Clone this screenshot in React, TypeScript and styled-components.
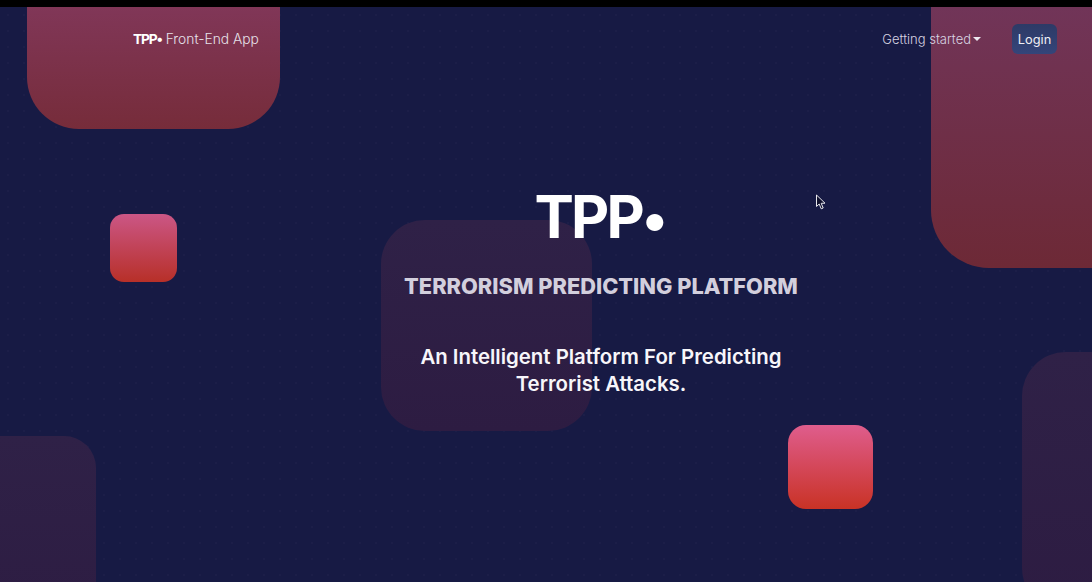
import React from "react";
import styled, { createGlobalStyle, css } from "styled-components";

const GlobalStyle = createGlobalStyle`
  html, body {
    margin: 0;
    padding: 0;
    background: #000;
  }
  body {
    font-family: "Inter", "Liberation Sans", sans-serif;
  }
`;

const Page = styled.div`
  width: 1092px;
  height: 582px;
  overflow: hidden;
  display: flex;
  flex-direction: column;
`;
const TopBar = styled.div`
  height: 7px;
  flex: none;
  background: #000;
`;
const Stage = styled.main`
  position: relative;
  flex: 1;
  overflow: hidden;
  background-color: #171a44;
  background-image: radial-gradient(
    circle at center,
    rgba(255, 255, 255, 0.02) 0.8px,
    transparent 1.2px
  );
  background-size: 16px 16px;
`;

const block = css`
  position: absolute;
`;
const bright = css`
  ${block}
  background: linear-gradient(180deg, #df5d8d 0%, #c93225 100%);
`;
const faint = css`
  ${block}
  background: linear-gradient(180deg, #2f2147 0%, #2d1c42 100%);
`;

const TopLeftBlock = styled.div`
  ${block}
  left: 27px;
  top: -6px;
  width: 253px;
  height: 128px;
  border-radius: 0 0 52px 52px;
  background: linear-gradient(180deg, #813759 0%, #762c3a 100%);
`;
const TopRightBlock = styled.div`
  ${block}
  left: 931px;
  top: -6px;
  width: 260px;
  height: 267px;
  border-radius: 0 0 0 58px;
  background: linear-gradient(180deg, #713559 0%, #6d2936 100%);
`;
const SmallBlock = styled.div`
  ${bright}
  left: 110px;
  top: 207px;
  width: 67px;
  height: 68px;
  border-radius: 14px;
  opacity: 0.9;
`;
const MediumBlock = styled.div`
  ${bright}
  left: 788px;
  top: 418px;
  width: 85px;
  height: 84px;
  border-radius: 18px;
`;
const CenterBlock = styled.div`
  ${faint}
  left: 381px;
  top: 213px;
  width: 211px;
  height: 211px;
  border-radius: 44px;
`;
const RightBlock = styled.div`
  ${faint}
  left: 1022px;
  top: 345px;
  width: 211px;
  height: 260px;
  border-radius: 44px;
`;
const LeftBlock = styled.div`
  ${faint}
  left: -115px;
  top: 429px;
  width: 211px;
  height: 211px;
  border-radius: 32px;
`;

const Nav = styled.nav`
  position: relative;
  display: flex;
  align-items: center;
  justify-content: space-between;
  height: 64px;
  padding: 0 35px 0 133px;
`;
const Brand = styled.a`
  padding-bottom: 1px;
  font-size: 13.8px;
  font-weight: 300;
  color: #e6e2ea;
`;
const BrandMark = styled.strong`
  font-weight: 700;
  color: #fff;
  letter-spacing: -1.2px;
`;
const NavRight = styled.div`
  display: flex;
  align-items: center;
  gap: 31px;
`;
const NavLink = styled.a`
  display: flex;
  align-items: center;
  gap: 2px;
  font-size: 13px;
  font-weight: 300;
  color: #d8d4e2;
`;
const Caret = styled.span`
  width: 0;
  height: 0;
  border-left: 4px solid transparent;
  border-right: 4px solid transparent;
  border-top: 4px solid #eeeaf2;
`;
const LoginButton = styled.button`
  width: 45px;
  height: 30px;
  padding: 0;
  border: 0;
  border-radius: 6px;
  background: linear-gradient(180deg, #2d3a66 0%, #34457a 100%);
  color: #f0eff5;
  font-family: inherit;
  font-size: 12.8px;
  font-weight: 400;
`;

const Hero = styled.section`
  position: relative;
  display: flex;
  flex-direction: column;
  align-items: center;
  width: 440px;
  margin: 110px 0 0 381px;
  text-align: center;
  color: #fff;
`;
const Logo = styled.h1`
  margin: 0;
  font-size: 59px;
  line-height: 72px;
  font-weight: 700;
  letter-spacing: -2.8px;
`;
const LogoDot = styled.span`
  font-size: 54px;
  letter-spacing: 0;
`;
const Subtitle = styled.h2`
  margin: 17px 0 0;
  font-size: 21.8px;
  line-height: 28px;
  font-weight: 800;
  color: #d3cfdd;
  white-space: nowrap;
`;
const Tagline = styled.p`
  margin: 43px 0 0;
  width: 420px;
  font-size: 20.4px;
  line-height: 27px;
  font-weight: 600;
  color: #f7f6fa;
`;
const Cursor = styled.svg`
  position: absolute;
  left: 815px;
  top: 187px;
  width: 12px;
  height: 17px;
`;

const App = () => (
  <Page>
    <GlobalStyle />
    <TopBar />
    <Stage>
      <TopLeftBlock />
      <TopRightBlock />
      <CenterBlock />
      <SmallBlock />
      <MediumBlock />
      <RightBlock />
      <LeftBlock />
      <Nav>
        <Brand>
          <BrandMark>TPP•</BrandMark> Front-End App
        </Brand>
        <NavRight>
          <NavLink>
            Getting started <Caret />
          </NavLink>
          <LoginButton>Login</LoginButton>
        </NavRight>
      </Nav>
      <Hero>
        <Logo>
          TPP<LogoDot>•</LogoDot>
        </Logo>
        <Subtitle>TERRORISM PREDICTING PLATFORM</Subtitle>
        <Tagline>An Intelligent Platform For Predicting Terrorist Attacks.</Tagline>
      </Hero>
      <Cursor viewBox="0 0 12 17">
        <path
          d="M1.5 1 L1.5 12.5 L4.2 10 L6.2 14.8 L8.2 14 L6.2 9.3 L10 9.2 Z"
          fill="#11122e"
          stroke="#e8e8ee"
          strokeWidth="1"
          strokeLinejoin="round"
        />
      </Cursor>
    </Stage>
  </Page>
);

export default App;
